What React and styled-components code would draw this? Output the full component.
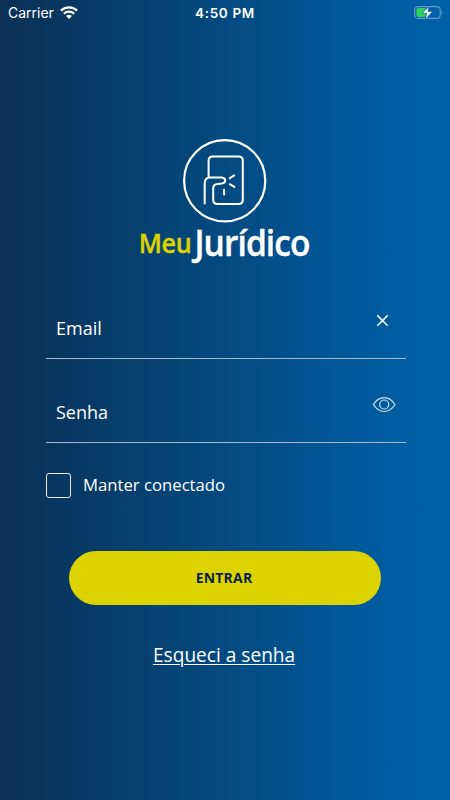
import React from "react";
import styled, { createGlobalStyle } from "styled-components";

const GlobalStyles = createGlobalStyle`
  * {
    box-sizing: border-box;
  }
  body {
    margin: 0;
    font-family: 'Open Sans', 'Noto Sans', sans-serif;
    color: #fff;
  }
`;

const Screen = styled.div`
  display: flex;
  flex-direction: column;
  height: 100vh;
  min-height: 800px;
  background: linear-gradient(90deg, #0a3055 0%, #054679 42%, #00589a 78%, #0063a9 100%);
`;

const StatusBar = styled.header`
  display: grid;
  grid-template-columns: 1fr auto 1fr;
  align-items: center;
  height: 25px;
  padding: 0 7px 0 8px;
  font-family: Inter, sans-serif;
  font-size: 14px;
`;

const Carrier = styled.div`
  display: flex;
  align-items: center;
  gap: 6px;
`;

const Time = styled.div`
  font-size: 13.5px;
  font-weight: 600;
  letter-spacing: 0.65px;
  margin-right: 1px;
`;

const BatteryIcon = styled.svg`
  justify-self: end;
`;

const Brand = styled.div`
  display: flex;
  justify-content: center;
  margin-top: 110px;
`;

const LogoDrawing = styled.svg`
  overflow: visible;
`;

const LogoText = styled.text`
  font-family: 'Open Sans', sans-serif;
  font-size: ${(props) => props.$size}px;
  font-weight: 600;
  letter-spacing: ${(props) => props.$spacing || 0}px;
  stroke: currentColor;
  stroke-width: 0.4px;
`;

const Form = styled.form`
  display: flex;
  flex-direction: column;
  padding: 0 44px 0 46px;
  margin-top: 6px;
`;

const Field = styled.label`
  display: flex;
  justify-content: space-between;
  height: 84px;
  padding: 0 10px;
  border-bottom: 1px solid #a5b9cf;
`;

const FieldName = styled.span`
  margin-top: 40px;
  font-size: 18px;
  line-height: 26px;
`;

const FieldIcon = styled.svg`
  margin-top: 33px;
  margin-right: ${(props) => props.$shift || 0}px;
`;

const Remember = styled.label`
  display: flex;
  align-items: flex-start;
  gap: 12px;
  height: 25px;
  margin-top: 30px;
  font-size: 16.7px;
  line-height: 23px;
`;

const Box = styled.span`
  width: 25px;
  height: 25px;
  border: 1.5px solid #e8edf3;
  border-radius: 3px;
`;

const Submit = styled.button`
  width: 312px;
  height: 54px;
  margin: 53px 0 0 23px;
  border: 0;
  border-radius: 27px;
  background: #ddd300;
  color: #0b1f45;
  font: 700 14px 'Open Sans', 'Noto Sans', sans-serif;
  letter-spacing: 0.2px;
  padding: 0 2px 2px 0;
`;

const Forgot = styled.a`
  margin: 36px 0 0 107px;
  font-size: 19.1px;
  line-height: 28px;
  text-decoration: underline;
  text-decoration-thickness: 1px;
  text-underline-offset: 2px;
`;

const Wifi = () => (
  <svg width="18" height="13" viewBox="0 0 18 13" fill="none" stroke="#fff" strokeWidth="2.2">
    <path d="M.9 4.6C5.4.3 12.6.3 17.1 4.6" />
    <path d="M3.8 7.7c2.9-2.8 7.5-2.8 10.4 0" />
    <path d="M9 13 6.1 9.9c1.6-1.5 4.2-1.5 5.8 0z" fill="#fff" stroke="none" />
  </svg>
);

const Battery = () => (
  <BatteryIcon width="29" height="14" viewBox="0 0 29 14" fill="none">
    <rect x=".7" y=".6" width="25.5" height="11.8" rx="3.4" stroke="#6d9cc7" strokeWidth="1.1" />
    <path d="M27.5 4.4v4c1.3-.7 1.3-3.3 0-4z" fill="#6d9cc7" />
    <rect x="2.4" y="2.1" width="9.6" height="8.8" rx="1.8" fill="#32d15a" />
    <path d="M15.4 0 8.2 7.2h4.5l-1.4 6.2L18.6 5.4H14z" fill="#fff" stroke="#0060a3" strokeWidth=".7" />
  </BatteryIcon>
);

const Logo = () => (
  <LogoDrawing width="176" height="134" viewBox="137 135 176 134" fill="none">
    <circle cx="224.7" cy="180.8" r="40.6" stroke="#fff" strokeWidth="2.2" />
    <g stroke="#fff" strokeWidth="2" strokeLinecap="round" strokeLinejoin="round">
      <path d="M208.6 177.8V160.7q0-4.3 4.3-4.3h25.6q4.3 0 4.3 4.3v39q0 4.3-4.3 4.3h-21q-4.3 0-4.3-4.3v-11.2q0-4.4 4.4-4.6l4.2-.3c4.6-.6 4.6-5.5 0-6h-11.7q-5.4 0-5.4 6v20" />
      <path d="m229.8 178.2 4.4-2.9M229.8 184.2l4.6 2.7M224.1 189.8v4.8" />
    </g>
    <LogoText x="138.8" y="253" fill="#ddd300" color="#ddd300" $size={26.5} $spacing={-0.4} textLength="52.5" lengthAdjust="spacingAndGlyphs">Meu</LogoText>
    <LogoText x="194.5" y="256" fill="#fff" color="#fff" $size={36} $spacing={-1} textLength="115" lengthAdjust="spacingAndGlyphs">Jurídico</LogoText>
  </LogoDrawing>
);

const App = () => {
  return (
    <Screen>
      <GlobalStyles />
      <StatusBar>
        <Carrier>Carrier <Wifi /></Carrier>
        <Time>4:50 PM</Time>
        <Battery />
      </StatusBar>
      <Brand>
        <Logo />
      </Brand>
      <Form>
        <Field>
          <FieldName>Email</FieldName>
          <FieldIcon $shift={7} width="13" height="25" viewBox="0 0 13 25" stroke="#fff" strokeWidth="1.5">
            <path d="m1.3 7.4 10.4 10.4M11.7 7.4 1.3 17.8" />
          </FieldIcon>
        </Field>
        <Field>
          <FieldName>Senha</FieldName>
          <FieldIcon width="24" height="25" viewBox="0 0 24 25" fill="none" stroke="#cfdeeb" strokeWidth="1.2">
            <path d="M1.4 12.5c5.6-9.3 16-9.3 21.6 0-5.6 9.3-16 9.3-21.6 0z" />
            <circle cx="12.2" cy="12.5" r="4.5" />
          </FieldIcon>
        </Field>
        <Remember>
          <Box />
          Manter conectado
        </Remember>
        <Submit type="button">ENTRAR</Submit>
        <Forgot>Esqueci a senha</Forgot>
      </Form>
    </Screen>
  );
};

export default App;
